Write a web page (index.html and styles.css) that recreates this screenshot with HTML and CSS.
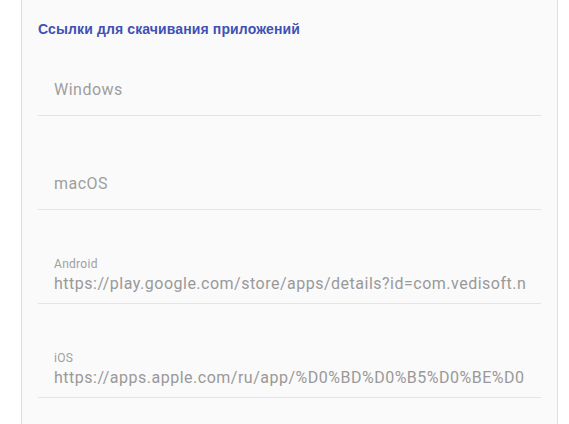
FILE: index.html
```html
<!DOCTYPE html>
<html lang="ru">
<head>
<meta charset="utf-8">
<title>Ссылки для скачивания приложений</title>
<link rel="stylesheet" href="styles.css">
</head>
<body>
<div class="card">
  <h2 class="title">Ссылки для скачивания приложений</h2>
  <div class="field">
    <div class="placeholder">Windows</div>
  </div>
  <div class="field">
    <div class="placeholder">macOS</div>
  </div>
  <div class="field filled">
    <div class="label">Android</div>
    <div class="value">https://play.google.com/store/apps/details?id=com.vedisoft.n</div>
  </div>
  <div class="field filled">
    <div class="label">iOS</div>
    <div class="value">https://apps.apple.com/ru/app/%D0%BD%D0%B5%D0%BE%D0</div>
  </div>
</div>
</body>
</html>
```

FILE: styles.css
```css
html, body {
  margin: 0;
  padding: 0;
  background: #ffffff;
}

.card {
  margin-left: 21px;
  width: 503px;
  min-height: 424px;
  box-sizing: content-box;
  padding: 21px 16px 0 16px;
  background: #fafafa;
  border-left: 1px solid #dedede;
  border-right: 1px solid #dedede;
}

.title {
  margin: 0;
  font-family: "Liberation Sans", Arial, sans-serif;
  font-weight: bold;
  font-size: 14px;
  line-height: 16px;
  letter-spacing: 0.12px;
  color: #3f51b5;
}

.field {
  padding: 43px 12px 16px 16px;
  border-bottom: 1px solid #e4e4e4;
  font-family: Roboto, "Noto Sans", sans-serif;
}

.field + .field {
  margin-top: 15px;
}

.field.filled {
  padding-top: 32px;
  padding-bottom: 10px;
}

.placeholder,
.value {
  font-size: 16px;
  line-height: 19px;
  letter-spacing: 0.5px;
  color: #9e9e9e;
  white-space: nowrap;
  overflow: hidden;
}

.value {
  color: #999999;
}

.label {
  font-size: 12px;
  line-height: 14px;
  letter-spacing: 0.3px;
  margin-bottom: 3px;
  color: #a0a0a0;
}
```
